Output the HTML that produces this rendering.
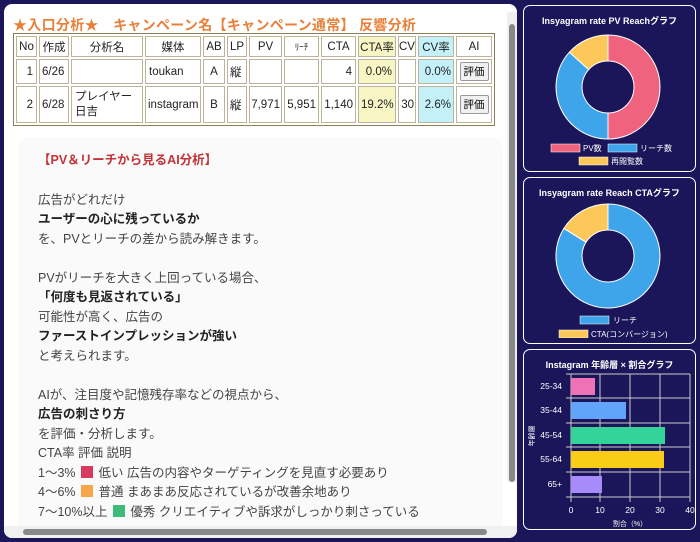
<!DOCTYPE html><html><head><meta charset="utf-8"><style>
*{margin:0;padding:0;box-sizing:border-box}
body{width:700px;height:542px;background:#1b1559;font-family:"Liberation Sans","Noto Sans CJK JP",sans-serif;position:relative;overflow:hidden}
#main{position:absolute;left:4px;top:4px;width:513px;height:534px;background:#fff;border-radius:8px;overflow:hidden}
h1{position:absolute;left:9px;top:11px;font-size:14px;color:#e8803a;font-weight:bold;letter-spacing:.3px;white-space:nowrap}
table{position:absolute;left:9px;top:29px;width:482px;table-layout:fixed;border-collapse:separate;border-spacing:2px;border:1px solid #8a7d5a;background:#fff;font-size:11.5px;color:#222}
td,th{border:1px solid #bcb39a;font-weight:normal;padding:0 3px;height:21px;white-space:nowrap;overflow:hidden}
th{text-align:center}
.r{text-align:right}.c{text-align:center}
.y{background:#f8f6c4}.b{background:#c4f1f9}
button{font-size:10.5px;padding:1px 3px;border:1px solid #999;border-radius:2px;background:#f1f1f1;font-family:inherit}
#ai{position:absolute;left:14px;top:133px;width:485px;height:420px;background:#fafafa;border-radius:12px;padding:14px 0 0 20px;font-size:12.5px;color:#444;line-height:19.5px}
#ai b{color:#222}
#ai .t{color:#c0343a;font-weight:bold;margin-bottom:20px}
.sq{display:inline-block;width:12px;height:12px;vertical-align:-1px;margin:0 2px}
.sb{position:absolute;background:#f0f0f0}
.p{position:absolute;left:523px;width:173px;border:1.5px solid #fff;border-radius:7px;background:#1b1559;color:#fff}
.p .h{font-size:9px;font-weight:bold;text-align:center;margin-top:8px}
</style></head><body>
<div id="main">
<h1>★入口分析★　キャンペーン名【キャンペーン通常】 反響分析</h1>
<table>
<colgroup><col style="width:21px"><col style="width:30px"><col style="width:72px"><col style="width:56px"><col style="width:22px"><col style="width:20px"><col style="width:33px"><col style="width:35px"><col style="width:35px"><col style="width:38px"><col style="width:18px"><col style="width:36px"><col></colgroup>
<tr><th style="padding:0">No</th><th style="padding:0">作成</th><th>分析名</th><th>媒体</th><th style="padding:0">AB</th><th style="padding:0">LP</th><th>PV</th><th style="font-size:9px">ﾘｰﾁ</th><th style="padding:0">CTA</th><th class="y" style="padding:0">CTA率</th><th style="padding:0">CV</th><th class="b" style="padding:0">CV率</th><th>AI</th></tr>
<tr style="height:25px"><td class="r">1</td><td style="padding:0 2px">6/26</td><td></td><td>toukan</td><td class="c">A</td><td style="padding:0 2px">縦</td><td></td><td></td><td class="r">4</td><td class="y r">0.0%</td><td></td><td class="b r" style="padding:0 2px">0.0%</td><td class="c" style="padding:0"><button>評価</button></td></tr>
<tr style="height:37px"><td class="r">2</td><td style="padding:0 2px">6/28</td><td style="line-height:15px;white-space:normal">プレイヤー日吉</td><td style="padding:0 2px">instagram</td><td class="c">B</td><td style="padding:0 2px">縦</td><td class="r" style="padding:0 1px">7,971</td><td class="r" style="padding:0 2px">5,951</td><td class="r" style="padding:0 2px">1,140</td><td class="y r" style="padding:0 2px">19.2%</td><td class="r" style="padding:0 1px">30</td><td class="b r" style="padding:0 2px">2.6%</td><td class="c" style="padding:0"><button>評価</button></td></tr>
</table>
<div id="ai">
<div class="t">【PV＆リーチから見るAI分析】</div>
広告がどれだけ<br><b>ユーザーの心に残っているか</b><br>を、PVとリーチの差から読み解きます。<br><br>
PVがリーチを大きく上回っている場合、<br><b>「何度も見返されている」</b><br>可能性が高く、広告の<br><b>ファーストインプレッションが強い</b><br>と考えられます。<br><br>
AIが、注目度や記憶残存率などの視点から、<br><b>広告の刺さり方</b><br>を評価・分析します。<br>CTA率 評価 説明<br>
1〜3% <span class="sq" style="background:#d63a5e"></span> 低い 広告の内容やターゲティングを見直す必要あり<br>
4〜6% <span class="sq" style="background:#f7a64a"></span> 普通 まあまあ反応されているが改善余地あり<br>
7〜10%以上 <span class="sq" style="background:#3dbb7a"></span> 優秀 クリエイティブや訴求がしっかり刺さっている
</div>
<div class="sb" style="right:0;top:8px;width:10px;height:470px"></div>
<div style="position:absolute;right:2px;top:20px;width:6px;height:458px;background:#888;border-radius:3px"></div>
<div class="sb" style="left:0;bottom:0;width:513px;height:12px"></div>
<div style="position:absolute;left:19px;bottom:3px;width:464px;height:6px;background:#888;border-radius:3px"></div>
</div>

<div class="p" style="top:5px;height:167px"><div class="h">Insyagram rate PV Reachグラフ</div>
<svg width="173" height="160" style="position:absolute;left:0;top:10px">
<g transform="translate(84,71)" stroke="#fff" stroke-width="1">
<path d="M0,-52 A52,52 0 0 1 0,52 L0,26 A26,26 0 0 0 0,-26Z" fill="#f0637f"/>
<path d="M0,52 A52,52 0 0 1 -38.6,-34.8 L-19.3,-17.4 A26,26 0 0 0 0,26Z" fill="#3ea5ea"/>
<path d="M-38.6,-34.8 A52,52 0 0 1 0,-52 L0,-26 A26,26 0 0 0 -19.3,-17.4Z" fill="#fdc85a"/>
</g>
<rect x="27" y="128" width="29" height="8" fill="#f0637f" stroke="#fff" stroke-width=".5"/><text x="59" y="135" font-size="8" fill="#fff">PV数</text>
<rect x="84" y="128" width="29" height="8" fill="#3ea5ea" stroke="#fff" stroke-width=".5"/><text x="116" y="135" font-size="8" fill="#fff">リーチ数</text>
<rect x="55" y="141" width="29" height="8" fill="#fdc85a" stroke="#fff" stroke-width=".5"/><text x="87" y="148" font-size="8" fill="#fff">再閲覧数</text>
</svg></div>

<div class="p" style="top:177px;height:167px"><div class="h">Insyagram rate Reach CTAグラフ</div>
<svg width="173" height="160" style="position:absolute;left:0;top:0">
<g transform="translate(84,78)" stroke="#fff" stroke-width="1">
<path d="M0,-52 A52,52 0 1 1 -44.1,-27.6 L-22,-13.8 A26,26 0 1 0 0,-26Z" fill="#3ea5ea"/>
<path d="M-44.1,-27.6 A52,52 0 0 1 0,-52 L0,-26 A26,26 0 0 0 -22,-13.8Z" fill="#fdc85a"/>
</g>
<rect x="56" y="138" width="29" height="8" fill="#3ea5ea" stroke="#fff" stroke-width=".5"/><text x="89" y="145" font-size="8" fill="#fff">リーチ</text>
<rect x="35" y="152" width="29" height="8" fill="#fdc85a" stroke="#fff" stroke-width=".5"/><text x="67" y="159" font-size="8" fill="#fff">CTA(コンバージョン)</text>
</svg></div>

<div class="p" style="top:349px;height:181px"><div class="h">Instagram 年齢層 × 割合グラフ</div>
<svg width="173" height="178" style="position:absolute;left:0;top:0" font-size="8.5" fill="#fff">
<g stroke="#ccc" stroke-width="1">
<line x1="47" y1="24" x2="47" y2="152"/><line x1="76" y1="24" x2="76" y2="152"/><line x1="106" y1="24" x2="106" y2="152"/><line x1="136" y1="24" x2="136" y2="152"/><line x1="166" y1="24" x2="166" y2="152"/>
<line x1="42" y1="24" x2="166" y2="24"/><line x1="42" y1="48" x2="166" y2="48"/><line x1="42" y1="73" x2="166" y2="73"/><line x1="42" y1="97" x2="166" y2="97"/><line x1="42" y1="122" x2="166" y2="122"/><line x1="42" y1="147" x2="166" y2="147"/>
</g>
<rect x="47" y="28" width="24" height="17" fill="#f072b6"/>
<rect x="47" y="52" width="55" height="17" fill="#60a5fa"/>
<rect x="47" y="77" width="94" height="17" fill="#34d399"/>
<rect x="47" y="101" width="93" height="17" fill="#facc15"/>
<rect x="47" y="126" width="31" height="17" fill="#a78bfa"/>
<g text-anchor="end"><text x="38" y="39">25-34</text><text x="38" y="63">35-44</text><text x="38" y="88">45-54</text><text x="38" y="112">55-64</text><text x="38" y="137">65+</text></g>
<g text-anchor="middle"><text x="47" y="163">0</text><text x="76" y="163">10</text><text x="106" y="163">20</text><text x="136" y="163">30</text><text x="166" y="163">40</text>
<text x="106" y="176" font-size="7">割合（%）</text></g>
<text x="0" y="0" font-size="7" transform="translate(10,86) rotate(-90)" text-anchor="middle">年齢層</text>
</svg></div>
</body></html>
